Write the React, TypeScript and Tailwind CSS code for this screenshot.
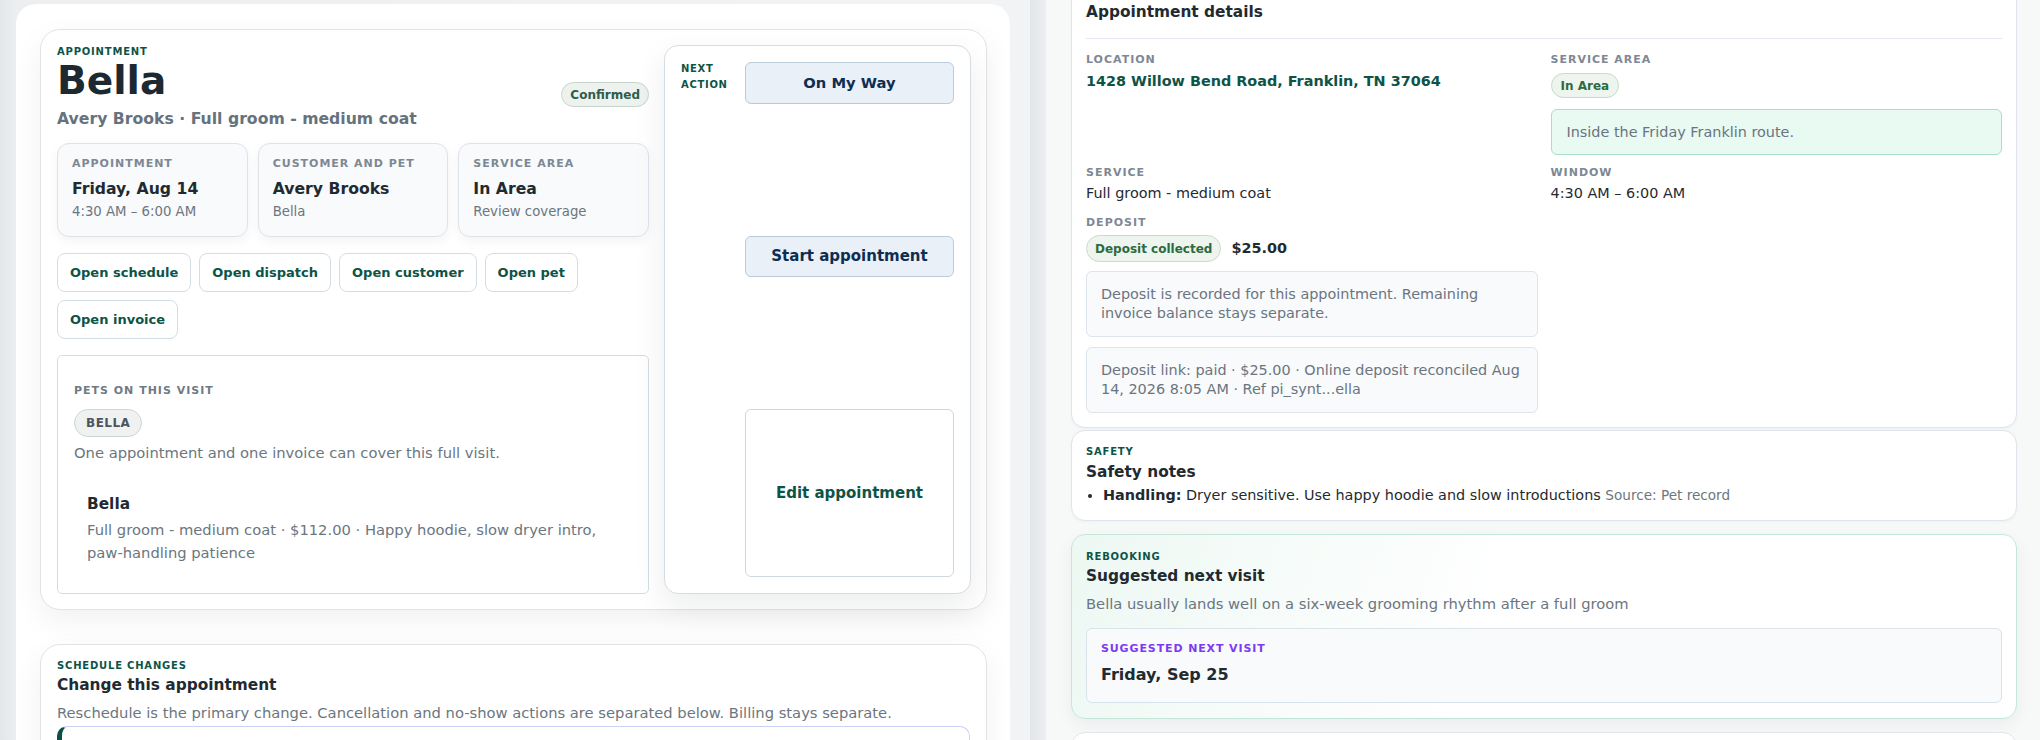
const eyebrow = "text-[10px] leading-[14px] font-bold uppercase tracking-[0.08em] text-[#0d5447]";
const fieldLabel = "text-[11px] leading-4 font-bold uppercase tracking-[0.09em] text-[#7d8894]";

function Tile({ label, value, sub }: { label: string; value: string; sub: string }) {
  return (
    <div className="rounded-xl border border-[#dde3e8] bg-[#f8fafc] px-3.5 pt-3 pb-[15px] shadow-[0_4px_12px_rgba(15,23,42,0.05)]">
      <p className={fieldLabel}>{label}</p>
      <p className="mt-[7px] text-[15.68px] leading-5 font-bold text-[#1f2a31]">{value}</p>
      <p className="mt-1 text-[13.28px] leading-[18px] text-[#6b7680]">{sub}</p>
    </div>
  );
}

function LinkButton({ children }: { children: string }) {
  return (
    <button className="h-[39px] rounded-lg border border-[#d6dde2] bg-white px-3 text-[13px] font-bold text-[#0d5447]">
      {children}
    </button>
  );
}

function HeroCard() {
  return (
    <div className="grid grid-cols-[592px_307px] gap-[15px] rounded-[20px] border border-[#dfe4e8] bg-white px-4 py-[15px] shadow-[0_10px_30px_rgba(15,23,42,0.06)]">
      {/* Summary column */}
      <div>
        <div className="flex items-start justify-between">
          <div>
            <p className={eyebrow}>Appointment</p>
            <h1 className="mt-[2px] text-[39px] leading-[39px] font-bold text-[#1d2930]">Bella</h1>
            <p className="mt-2 text-[15.68px] leading-[22px] font-bold text-[#66727d]">
              Avery Brooks · Full groom - medium coat
            </p>
          </div>
          <span className="mt-[37px] inline-flex h-[25px] items-center rounded-full border border-[#c7d6cd] bg-[#edf2ef] px-2 text-[12px] font-bold text-[#2f5d4a]">
            Confirmed
          </span>
        </div>

        <div className="mt-[13px] grid grid-cols-3 gap-[10px]">
          <Tile label="Appointment" value="Friday, Aug 14" sub="4:30 AM – 6:00 AM" />
          <Tile label="Customer and pet" value="Avery Brooks" sub="Bella" />
          <Tile label="Service area" value="In Area" sub="Review coverage" />
        </div>

        <div className="mt-4 flex flex-wrap gap-2">
          <LinkButton>Open schedule</LinkButton>
          <LinkButton>Open dispatch</LinkButton>
          <LinkButton>Open customer</LinkButton>
          <LinkButton>Open pet</LinkButton>
          <LinkButton>Open invoice</LinkButton>
        </div>

        <div className="mt-4 rounded-[5px] border border-[#d5dce1] bg-white px-4 pt-[27px] pb-4">
          <p className="text-[11px] leading-4 font-bold uppercase tracking-[0.09em] text-[#6f7a84]">Pets on this visit</p>
          <span className="mt-[10px] inline-flex h-[28px] items-center rounded-full border border-[#cdd6d0] bg-[#eff2f0] px-[11px] text-[12px] font-bold tracking-[0.04em] text-[#4b5560]">
            BELLA
          </span>
          <p className="mt-[6px] text-[14.72px] leading-5 text-[#6b7680]">
            One appointment and one invoice can cover this full visit.
          </p>
          <div className="mt-[18px] px-[13px] pt-[13px] pb-[13px]">
            <p className="text-[15.36px] leading-5 font-bold text-[#1f2a31]">Bella</p>
            <p className="mt-1 text-[14.72px] leading-[23px] text-[#6b7680]">
              Full groom - medium coat · $112.00 · Happy hoodie, slow dryer intro, paw-handling patience
            </p>
          </div>
        </div>
      </div>

      {/* Next action column */}
      <div className="grid grid-cols-[48px_1fr] gap-4 rounded-[14px] border border-[#d5dde3] bg-white p-4 shadow-[0_12px_32px_rgba(15,23,42,0.08)]">
        <p className="-mt-[1px] text-[10px] leading-4 font-bold uppercase tracking-[0.07em] text-[#0d5447]">Next action</p>
        <div className="flex flex-col">
          <button className="h-[42px] rounded-md border border-[#bccbda] bg-[#e9f0f7] text-[14.72px] font-bold text-[#0f2d50]">
            On My Way
          </button>
          <button className="mt-[132px] h-[41px] rounded-md border border-[#bccbda] bg-[#e9f0f7] text-[15px] font-bold text-[#0f2d50]">
            Start appointment
          </button>
          <button className="mt-[132px] flex-1 rounded-md border border-[#cfd8e0] bg-white text-[15px] font-bold text-[#0d5447]">
            Edit appointment
          </button>
        </div>
      </div>
    </div>
  );
}

function ScheduleCard() {
  return (
    <div className="mt-[34px] rounded-[20px] border border-[#dfe4e8] bg-white px-4 pt-[14px] shadow-[0_10px_30px_rgba(15,23,42,0.06)]">
      <p className={eyebrow}>Schedule changes</p>
      <h2 className="mt-[2px] text-[15.36px] leading-5 font-bold text-[#1f2a31]">Change this appointment</h2>
      <p className="mt-2 text-[14.72px] leading-5 text-[#6b7680]">
        Reschedule is the primary change. Cancellation and no-show actions are separated below. Billing stays separate.
      </p>
      <div className="mt-[3px] h-[80px] rounded-[10px] border border-l-[5px] border-[#c9d2f2] border-l-[#0c4f44] bg-white" />
    </div>
  );
}

function DetailsCard() {
  return (
    <div className="rounded-[14px] border border-[#dfe5ea] bg-white px-[14px] pt-[14px] pb-[14px] shadow-[0_1px_3px_rgba(15,23,42,0.04)]">
      <h2 className="border-b border-[#e2e8ee] pb-[15px] text-[15.36px] leading-[22px] font-bold text-[#1f2a31]">
        Appointment details
      </h2>
      <div className="mt-[13px] grid grid-cols-2 gap-x-[13px] gap-y-[10px]">
        <div>
          <p className={fieldLabel}>Location</p>
          <p className="mt-[3px] text-[14.4px] leading-5 font-bold text-[#0d5447]">1428 Willow Bend Road, Franklin, TN 37064</p>
        </div>
        <div>
          <p className={fieldLabel}>Service area</p>
          <span className="mt-[5px] inline-flex h-[25px] items-center rounded-full border border-[#c5dcc8] bg-[#eef5ef] px-[9px] text-[12px] font-bold text-[#2d6a3e]">
            In Area
          </span>
          <div className="mt-[11px] rounded-md border border-[#a9dec8] bg-[#e9faf3] px-[15px] py-3 text-[14.4px] leading-5 text-[#687480]">
            Inside the Friday Franklin route.
          </div>
        </div>
        <div>
          <p className={fieldLabel}>Service</p>
          <p className="mt-[2px] text-[14.4px] leading-5 text-[#1f2a31]">Full groom - medium coat</p>
        </div>
        <div>
          <p className={fieldLabel}>Window</p>
          <p className="mt-[2px] text-[14.4px] leading-5 text-[#1f2a31]">4:30 AM – 6:00 AM</p>
        </div>
        <div className="mt-[2px]">
          <p className={fieldLabel}>Deposit</p>
          <div className="mt-1 flex items-center gap-[10px]">
            <span className="inline-flex h-[27px] items-center rounded-full border border-[#c5dcc8] bg-[#eef5ef] px-2 text-[12px] font-bold text-[#2d6a3e]">
              Deposit collected
            </span>
            <span className="text-[14.4px] font-bold text-[#1f2a31]">$25.00</span>
          </div>
          <div className="mt-[9px] rounded-md border border-[#dfe5ec] bg-[#f8fafc] py-[13px] pr-3 pl-[14px] text-[14.4px] leading-[19px] text-[#6b7580]">
            Deposit is recorded for this appointment. Remaining invoice balance stays separate.
          </div>
          <div className="mt-[10px] rounded-md border border-[#dfe5ec] bg-[#f8fafc] py-[13px] pr-3 pl-[14px] text-[14.4px] leading-[19px] text-[#6b7580]">
            Deposit link: paid · $25.00 · Online deposit reconciled Aug 14, 2026 8:05 AM · Ref pi_synt...ella
          </div>
        </div>
      </div>
    </div>
  );
}

function SafetyCard() {
  return (
    <div className="mt-[2px] rounded-[14px] border border-[#dfe5ea] bg-white px-[14px] pt-[14px] pb-[15px] shadow-[0_1px_3px_rgba(15,23,42,0.04)]">
      <p className={eyebrow}>Safety</p>
      <h2 className="mt-[3px] text-[15.36px] leading-5 font-bold text-[#1f2a31]">Safety notes</h2>
      <ul className="mt-[3px] list-disc pl-[17px] text-[14.4px] leading-5 text-[#1f2a31]">
        <li>
          <span className="font-bold">Handling:</span> Dryer sensitive. Use happy hoodie and slow introductions{" "}
          <span className="text-[13.6px] text-[#6b7680]">Source: Pet record</span>
        </li>
      </ul>
    </div>
  );
}

function RebookingCard() {
  return (
    <div className="mt-[13px] rounded-[14px] border border-[#c3e8da] bg-[linear-gradient(110deg,#edf8f3_0%,#ffffff_45%)] px-[14px] pt-[15px] pb-[15px] shadow-[0_6px_18px_rgba(15,23,42,0.05)]">
      <p className={eyebrow}>Rebooking</p>
      <h2 className="mt-[2px] text-[15.36px] leading-5 font-bold text-[#1f2a31]">Suggested next visit</h2>
      <p className="mt-2 text-[14.72px] leading-5 text-[#6b7680]">
        Bella usually lands well on a six-week grooming rhythm after a full groom
      </p>
      <div className="mt-[14px] rounded-md border border-[#dbe3ea] bg-[#f8fafc] px-[14px] pt-3 pb-4">
        <p className="text-[11px] leading-4 font-bold uppercase tracking-[0.08em] text-[#7e3af2]">Suggested next visit</p>
        <p className="mt-[7px] text-[16px] leading-[22px] font-bold text-[#1f2a31]">Friday, Sep 25</p>
      </div>
    </div>
  );
}

export default function App() {
  return (
    <div className="flex h-[740px] w-[2040px] overflow-hidden bg-[#eceef0] font-['DejaVu_Sans',Verdana,sans-serif]">
      {/* Left: appointment workspace */}
      <div className="w-[1030px] shrink-0 bg-[linear-gradient(90deg,#e3e7ea_0px,#eceef0_16px,#f2f3f4_1010px)] pt-1 pr-5 pl-4">
        <div className="h-full rounded-t-[20px] bg-white pt-[25px] pr-[23px] pl-6">
          <HeroCard />
          <ScheduleCard />
        </div>
      </div>

      {/* Right: details rail */}
      <div className="flex flex-1">
        <div className="w-4 bg-gradient-to-r from-[#e3e6e9] to-[#eceef0]" />
        <div className="flex-1 bg-[#f7f8f8] pr-[23px] pl-[25px]">
          <div className="-mt-[14px] flex flex-col">
            <DetailsCard />
            <SafetyCard />
            <RebookingCard />
            <div className="mt-[13px] h-[120px] rounded-[14px] border border-[#dfe5ea] bg-white" />
          </div>
        </div>
      </div>
    </div>
  );
}
